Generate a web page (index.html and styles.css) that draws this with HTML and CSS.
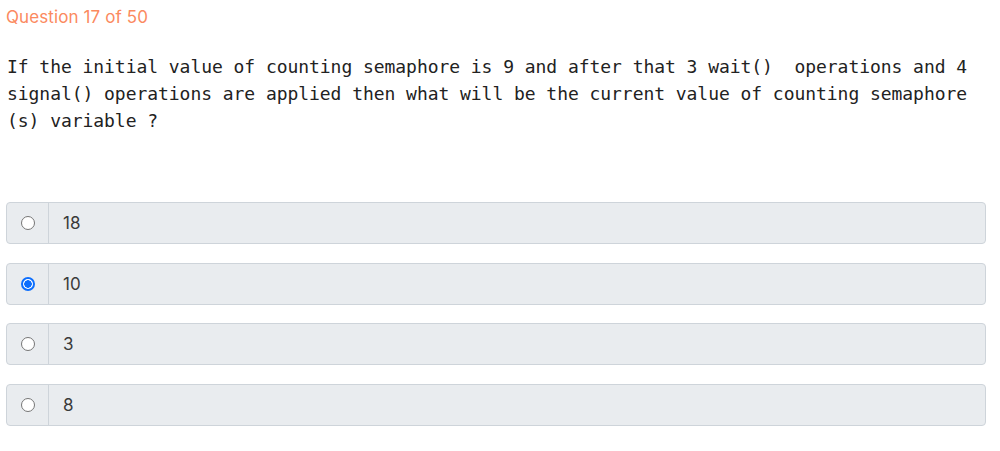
FILE: index.html
```html
<!DOCTYPE html>
<html>
<head>
<meta charset="utf-8">
<link rel="stylesheet" href="styles.css">
</head>
<body>
<div class="quiz">
  <div class="counter">Question 17 of 50</div>
  <div class="question">If the initial value of counting semaphore is 9 and after that 3 wait()&nbsp; operations and 4 signal() operations are applied then what will be the current value of counting semaphore (s) variable ?</div>
  <div class="options">
    <label class="option">
      <span class="addon"><span class="radio"></span></span>
      <span class="value">18</span>
    </label>
    <label class="option">
      <span class="addon"><span class="radio checked"></span></span>
      <span class="value">10</span>
    </label>
    <label class="option">
      <span class="addon"><span class="radio"></span></span>
      <span class="value">3</span>
    </label>
    <label class="option">
      <span class="addon"><span class="radio"></span></span>
      <span class="value">8</span>
    </label>
  </div>
</div>
</body>
</html>
```
FILE: styles.css
```css
* { box-sizing: border-box; }
html, body { margin: 0; padding: 0; background: #fff; }
.quiz { padding: 6px 14px 0 6px; }
.counter {
  font-family: "Inter", "Noto Sans", sans-serif;
  font-size: 17px;
  line-height: 22px;
  color: #fb8a5f;
  letter-spacing: 0.1px;
}
.question {
  margin-top: 25px;
  padding-left: 1px;
  font-family: "DejaVu Sans Mono", monospace;
  font-size: 18px;
  line-height: 27px;
  color: #222;
  letter-spacing: -0.05px;
}
.options {
  margin-top: 68px;
  display: flex;
  flex-direction: column;
  gap: 18.7px;
}
.option {
  display: flex;
  height: 42px;
  border: 1px solid #ced4da;
  border-radius: 4px;
  background: #e9ecef;
}
.addon {
  width: 42px;
  display: flex;
  align-items: center;
  justify-content: center;
  border-right: 1px solid #ced4da;
}
.radio {
  width: 14px;
  height: 14px;
  border-radius: 50%;
  border: 1px solid #767676;
  background: #fff;
}
.radio.checked {
  border: 2px solid #0d6efd;
  background: radial-gradient(circle, #0d6efd 0 3.5px, #fff 4px);
}
.value {
  display: flex;
  align-items: center;
  padding-left: 14px;
  font-family: "Inter", "Noto Sans", sans-serif;
  font-size: 17px;
  color: #3a3a3a;
}
```
